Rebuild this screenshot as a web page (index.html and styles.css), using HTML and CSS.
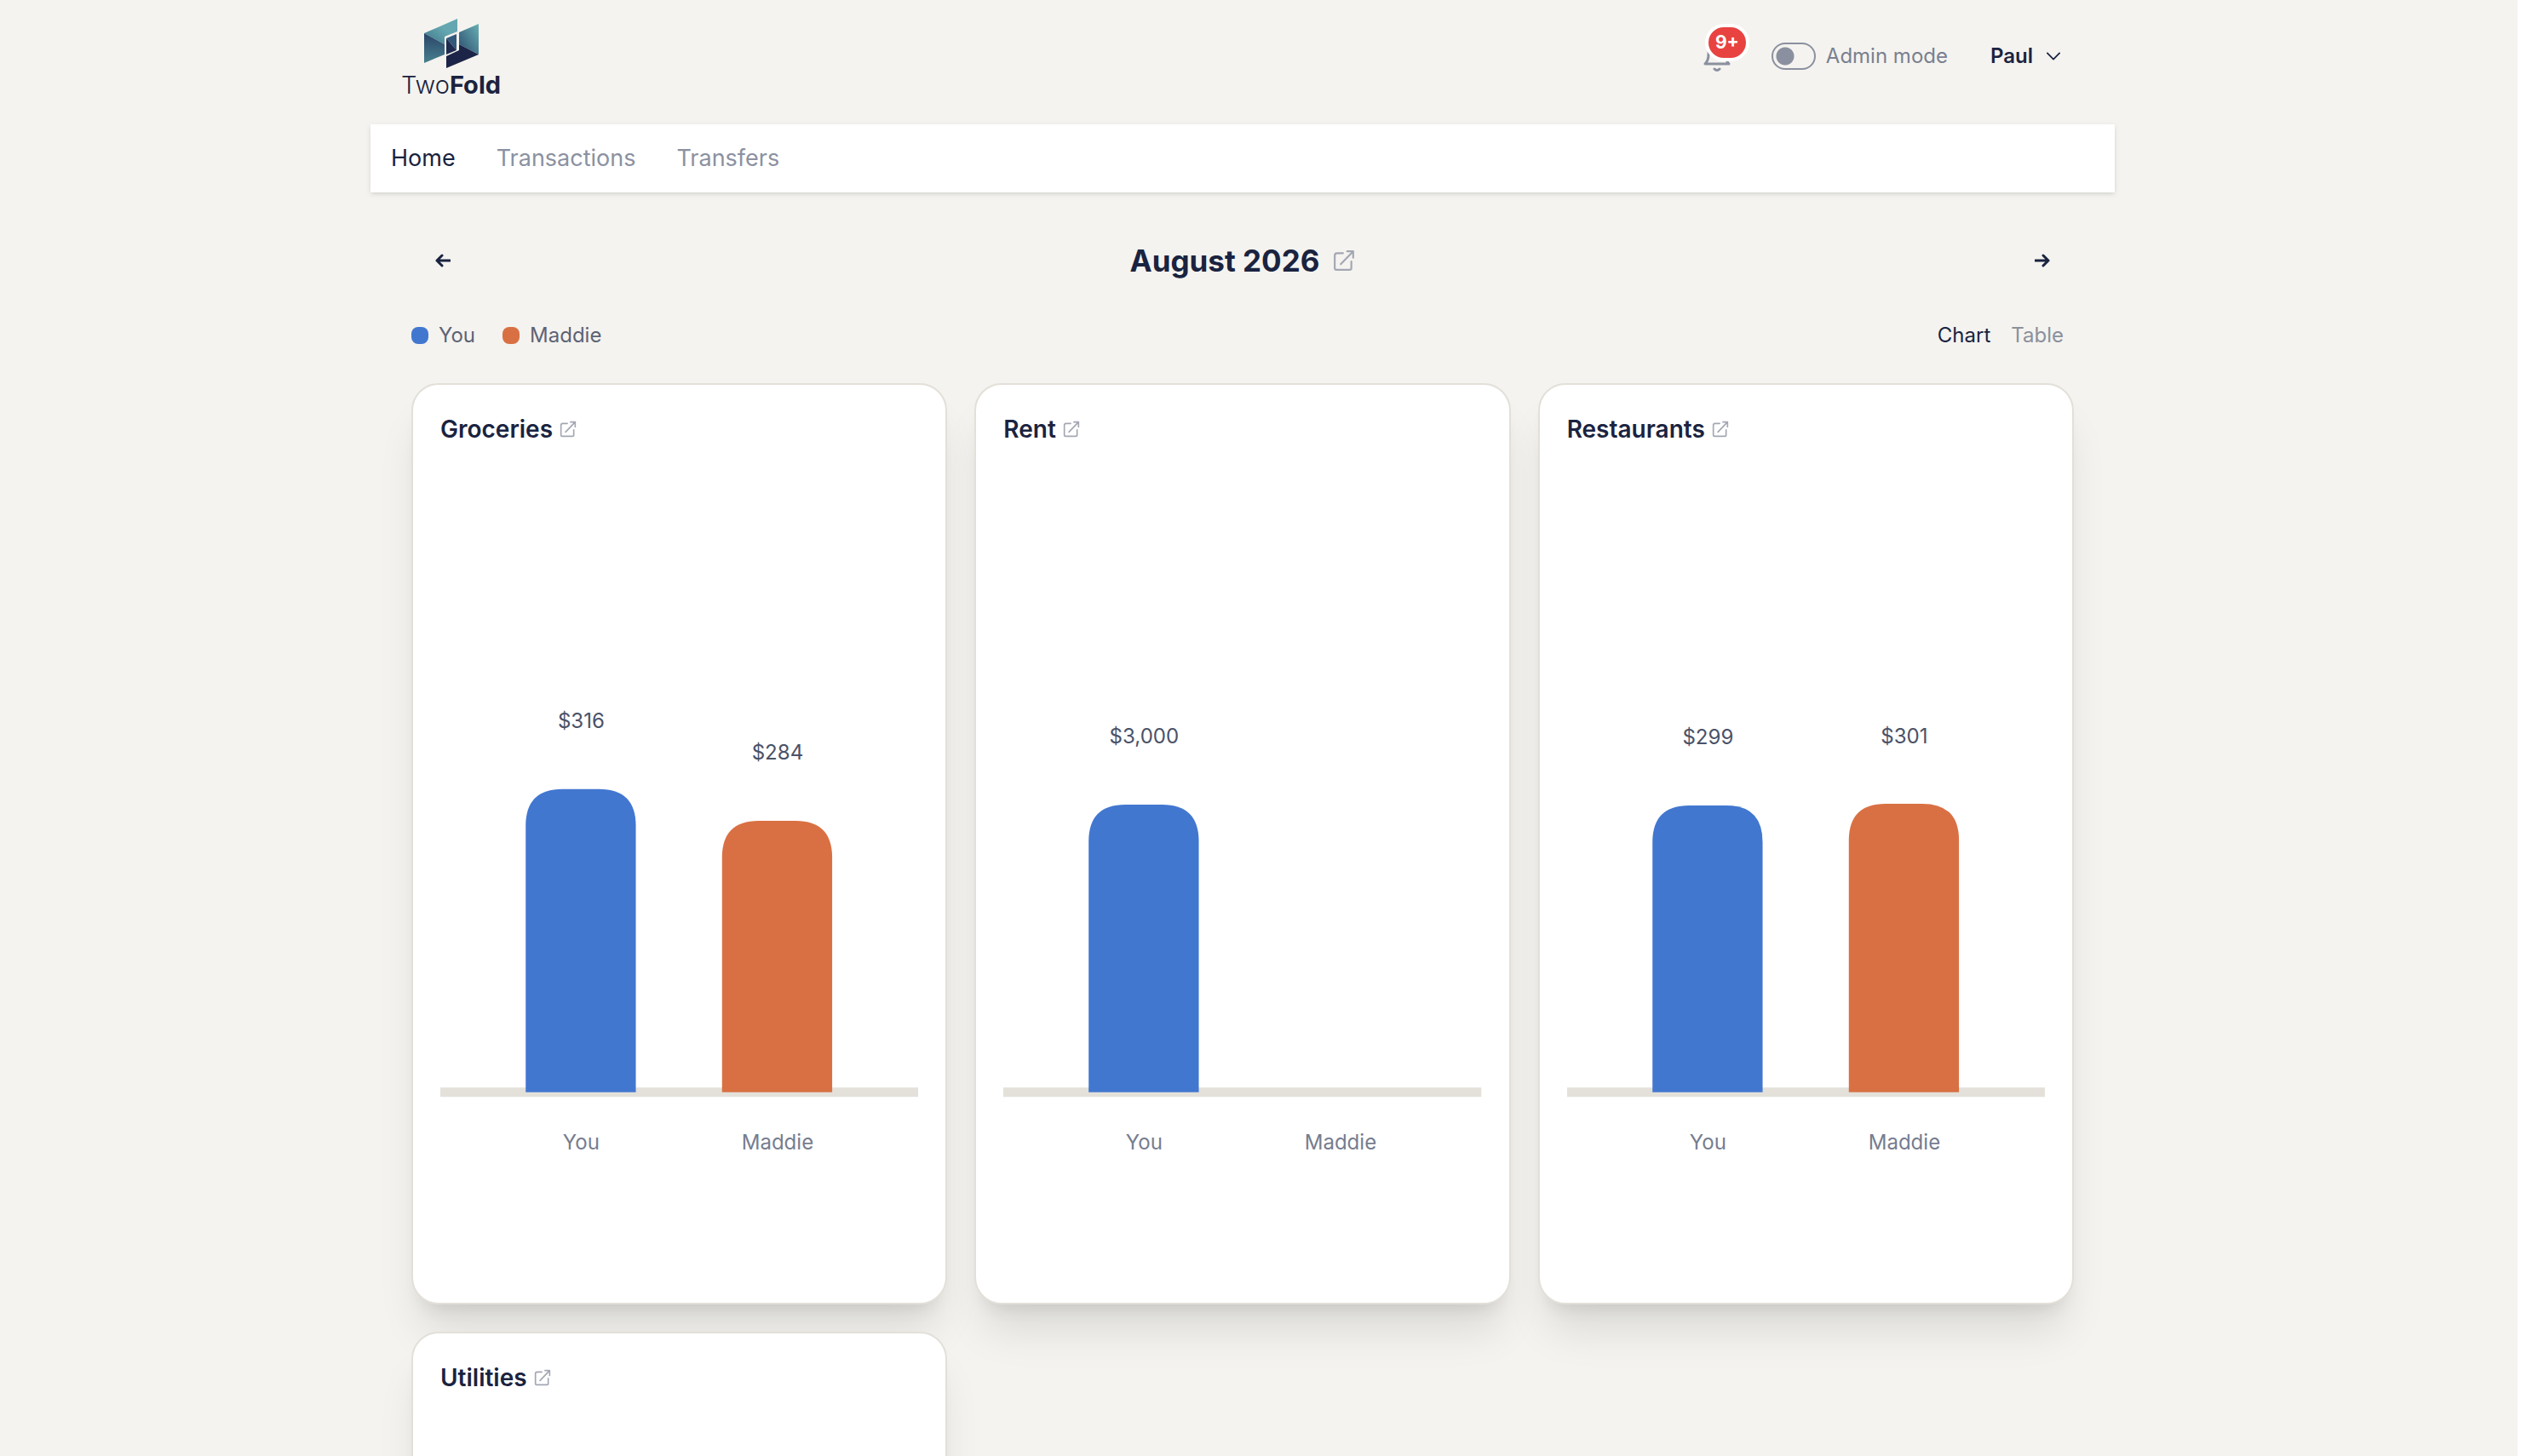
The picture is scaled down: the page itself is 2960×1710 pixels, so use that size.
FILE: index.html
```html
<!DOCTYPE html>
<html lang="en">

<head>
    <meta charset="UTF-8" />
    <meta name="viewport" content="width=device-width, initial-scale=1.0" />
    <title>TwoFold</title>
    <link rel="stylesheet" href="styles.css">
</head>

<body>
    <!-- Shared icons -->
    <svg class="sprite" aria-hidden="true">
        <symbol id="icon-link" viewBox="0 0 24 24">
            <path d="M11 4H4.500A2.500 2.500 0 0 0 2 6.500V20a2 2 0 0 0 2 2h14a2 2 0 0 0 2-2v-7M8.500 16 22 2M15.500 2H22v7" />
        </symbol>
    </svg>

    <div class="container">
        <header class="header">
            <a href="#" class="logo">
                <svg class="logo-mark" viewBox="0 0 64 58" aria-hidden="true">
                    <defs>
                        <linearGradient id="teal" x1="0" y1="1" x2="1" y2="0">
                            <stop offset="0" stop-color="#3f7488" />
                            <stop offset="0.600" stop-color="#64a7b0" />
                        </linearGradient>
                        <linearGradient id="blue" x1="0" y1="0" x2="0" y2="1">
                            <stop offset="0" stop-color="#2a4468" />
                            <stop offset="1" stop-color="#47808f" />
                        </linearGradient>
                        <linearGradient id="side" x1="1" y1="0" x2="0" y2="1">
                            <stop offset="0" stop-color="#68afb5" />
                            <stop offset="1" stop-color="#2b4c6c" />
                        </linearGradient>
                    </defs>
                    <path fill="url(#teal)" d="M0 17 39 0v15L24 21v9z" />
                    <path fill="url(#blue)" d="M0 17 24 30v12L0 52z" />
                    <path fill="url(#side)" d="M41 16 64 6v36L41 30z" />
                    <path fill="#1c2547" d="M41 30 64 42 26 58V44l15-7z" />
                    <path fill="#33597a" d="M26 23 38 18v19z" />
                    <path fill="#1f2b4f" d="M26 23 38 37 26 42z" />
                </svg>
                <span class="logo-text">Two<b>Fold</b></span>
            </a>
            <div class="header-actions">
                <button class="bell-btn" aria-label="Notifications">
                    <svg class="bell" viewBox="0 0 32 36" aria-hidden="true">
                        <path d="M2 27h28c-2-2-4-5-4-11 0-8-4-13-10-13S6 8 6 16c0 6-2 9-4 11zM13 33q3 3 6 0" />
                    </svg>
                    <span class="badge">9+</span>
                </button>
                <label class="admin-toggle">
                    <input type="checkbox" class="switch" />
                    Admin mode
                </label>
                <button class="user-btn">
                    Paul
                    <svg class="chevron" viewBox="0 0 18 12" aria-hidden="true">
                        <path d="m1 2 8 8 8-8" />
                    </svg>
                </button>
            </div>
        </header>

        <nav class="nav">
            <a href="#" class="active">Home</a>
            <a href="#">Transactions</a>
            <a href="#">Transfers</a>
        </nav>

        <main class="content">
            <div class="month-bar">
                <button class="arrow-btn" aria-label="Previous month">
                    <svg viewBox="0 0 18 16" aria-hidden="true"><path d="M17 8H2M8 2 2 8l6 6" /></svg>
                </button>
                <h1>August 2026 <a href="#" aria-label="Open month"><svg class="link-icon"><use href="#icon-link" /></svg></a></h1>
                <button class="arrow-btn" aria-label="Next month">
                    <svg viewBox="0 0 18 16" aria-hidden="true"><path d="M1 8h15M10 2l6 6-6 6" /></svg>
                </button>
            </div>

            <div class="toolbar">
                <div class="legend">
                    <span class="legend-item"><i class="swatch you"></i>You</span>
                    <span class="legend-item"><i class="swatch maddie"></i>Maddie</span>
                </div>
                <div class="view-switch">
                    <button class="active">Chart</button>
                    <button>Table</button>
                </div>
            </div>

            <div class="cards">
                <section class="card">
                    <h2>Groceries <a href="#" aria-label="Open Groceries"><svg class="link-icon"><use href="#icon-link" /></svg></a></h2>
                    <svg class="chart" viewBox="0 0 560 936">
                        <path class="axis" d="M0 721h560" />
                        <path class="bar you" d="M100 721V409q0-43 43-43h43q43 0 43 43v312z" />
                        <path class="bar maddie" d="M330 721V446q0-43 43-43h43q43 0 43 43v275z" />
                        <text class="value" x="165" y="294">$316</text>
                        <text class="value" x="395" y="331">$284</text>
                        <text class="name" x="165" y="788">You</text>
                        <text class="name" x="395" y="788">Maddie</text>
                    </svg>
                </section>

                <section class="card">
                    <h2>Rent <a href="#" aria-label="Open Rent"><svg class="link-icon"><use href="#icon-link" /></svg></a></h2>
                    <svg class="chart" viewBox="0 0 560 936">
                        <path class="axis" d="M0 721h560" />
                        <path class="bar you" d="M100 721V427q0-43 43-43h43q43 0 43 43v294z" />
                        <text class="value" x="165" y="312">$3,000</text>
                        <text class="name" x="165" y="788">You</text>
                        <text class="name" x="395" y="788">Maddie</text>
                    </svg>
                </section>

                <section class="card">
                    <h2>Restaurants <a href="#" aria-label="Open Restaurants"><svg class="link-icon"><use href="#icon-link" /></svg></a></h2>
                    <svg class="chart" viewBox="0 0 560 936">
                        <path class="axis" d="M0 721h560" />
                        <path class="bar you" d="M100 721V428q0-43 43-43h43q43 0 43 43v293z" />
                        <path class="bar maddie" d="M330 721V426q0-43 43-43h43q43 0 43 43v295z" />
                        <text class="value" x="165" y="313">$299</text>
                        <text class="value" x="395" y="312">$301</text>
                        <text class="name" x="165" y="788">You</text>
                        <text class="name" x="395" y="788">Maddie</text>
                    </svg>
                </section>

                <section class="card">
                    <h2>Utilities <a href="#" aria-label="Open Utilities"><svg class="link-icon"><use href="#icon-link" /></svg></a></h2>
                    <svg class="chart" viewBox="0 0 560 936">
                        <path class="axis" d="M0 721h560" />
                    </svg>
                </section>
            </div>
        </main>
    </div>
</body>

</html>
```

FILE: styles.css
```css
* {
    box-sizing: border-box;
}

body {
    margin: 0;
    padding-right: 38px;
    border-right: 4px solid #fff;
    background-color: #f4f3ef;
    background-clip: padding-box;
    color: #1a2340;
    font-family: Inter, sans-serif;
    font-size: 24px;
    line-height: 32px;
}

button {
    padding: 0;
    border: none;
    background: none;
    color: inherit;
    font: inherit;
    cursor: pointer;
}

a {
    color: inherit;
    text-decoration: none;
}

svg {
    display: block;
    fill: none;
    stroke-linecap: round;
    stroke-linejoin: round;
}

.sprite {
    display: none;
}

.container {
    max-width: 2048px;
    margin: 0 auto;
}

/* Header */
.header {
    display: flex;
    justify-content: space-between;
    align-items: flex-start;
    height: 146px;
    padding: 22px 64px 0 36px;
}

.logo {
    display: flex;
    flex-direction: column;
    align-items: center;
    gap: 4px;
}

.logo-mark {
    width: 64px;
    height: 58px;
}

.logo-text {
    font-size: 29px;
    font-weight: 300;
    line-height: 32px;
}

.logo-text b {
    font-weight: 700;
}

.header-actions {
    display: flex;
    align-items: center;
    height: 88px;
    color: #7a8090;
}

.bell-btn {
    position: relative;
    margin-right: 48px;
}

.bell {
    width: 32px;
    height: 36px;
    stroke: #8b90a0;
    stroke-width: 3;
}

.badge {
    position: absolute;
    top: -20px;
    left: 2px;
    width: 52px;
    height: 44px;
    border: 4px solid #fff;
    border-radius: 22px;
    background: #e84340;
    color: #fff;
    font-size: 21px;
    font-weight: 700;
    line-height: 36px;
    text-align: center;
}

.admin-toggle {
    display: flex;
    align-items: center;
    gap: 12px;
    margin-right: 50px;
}

.switch {
    appearance: none;
    width: 52px;
    height: 32px;
    margin: 0;
    border: 2px solid #8b90a0;
    border-radius: 16px;
    background: radial-gradient(circle at 14px 14px, #8b90a0 10px, transparent 11px);
}

.user-btn {
    display: flex;
    align-items: center;
    gap: 16px;
    color: #1a2340;
    font-weight: 600;
}

.chevron {
    width: 16px;
    height: 12px;
    stroke: currentColor;
    stroke-width: 2;
}

/* Navigation */
.nav {
    display: flex;
    gap: 48px;
    padding: 20px 24px;
    background: #fff;
    box-shadow: 0 2px 6px rgba(0, 0, 0, 0.1), 0 2px 4px -2px rgba(0, 0, 0, 0.1);
    color: #8b91a1;
    font-size: 27px;
    line-height: 40px;
}

.nav .active,
.view-switch .active {
    color: #1a2340;
}

/* Month and toolbar */
.content {
    padding: 56px 48px;
}

.month-bar {
    display: flex;
    justify-content: space-between;
    align-items: center;
    padding: 0 28px;
}

.arrow-btn svg {
    width: 18px;
    height: 16px;
    stroke: currentColor;
    stroke-width: 3;
}

h1,
h2 {
    display: flex;
    align-items: center;
    margin: 0;
}

h1 {
    gap: 16px;
    font-size: 35px;
    font-weight: 700;
    line-height: 48px;
}

.link-icon {
    width: 26px;
    height: 26px;
    stroke: #a3a7b3;
    stroke-width: 2;
}

.toolbar {
    display: flex;
    justify-content: space-between;
    margin: 48px 0 40px;
    padding-right: 12px;
}

.legend {
    display: flex;
    gap: 32px;
    color: #5d6375;
}

.legend-item {
    display: flex;
    align-items: center;
    gap: 12px;
}

.swatch {
    width: 20px;
    height: 20px;
    border-radius: 8px;
}

.swatch.you {
    background: #4277d0;
}

.swatch.maddie {
    background: #d97043;
}

.view-switch {
    display: flex;
    gap: 24px;
    color: #8b909c;
}

/* Category cards */
.cards {
    display: grid;
    grid-template-columns: repeat(3, 1fr);
    gap: 32px;
}

.card {
    padding: 32px;
    border: 2px solid #e2e0d8;
    border-radius: 32px;
    background: #fff;
    box-shadow: 0 40px 50px -10px rgba(0, 0, 0, 0.1), 0 16px 20px -12px rgba(0, 0, 0, 0.1);
}

h2 {
    gap: 8px;
    margin-bottom: 36px;
    font-size: 28px;
    font-weight: 600;
    line-height: 40px;
}

h2 .link-icon {
    width: 20px;
    height: 20px;
}

.chart {
    width: 100%;
    font-size: 24px;
    text-anchor: middle;
}

.axis {
    stroke: #e4e1da;
    stroke-width: 11;
    stroke-linecap: butt;
}

.bar.you {
    fill: #4277d0;
}

.bar.maddie {
    fill: #d97043;
}

.value {
    fill: #4a5268;
}

.name {
    fill: #767d8f;
}
```
